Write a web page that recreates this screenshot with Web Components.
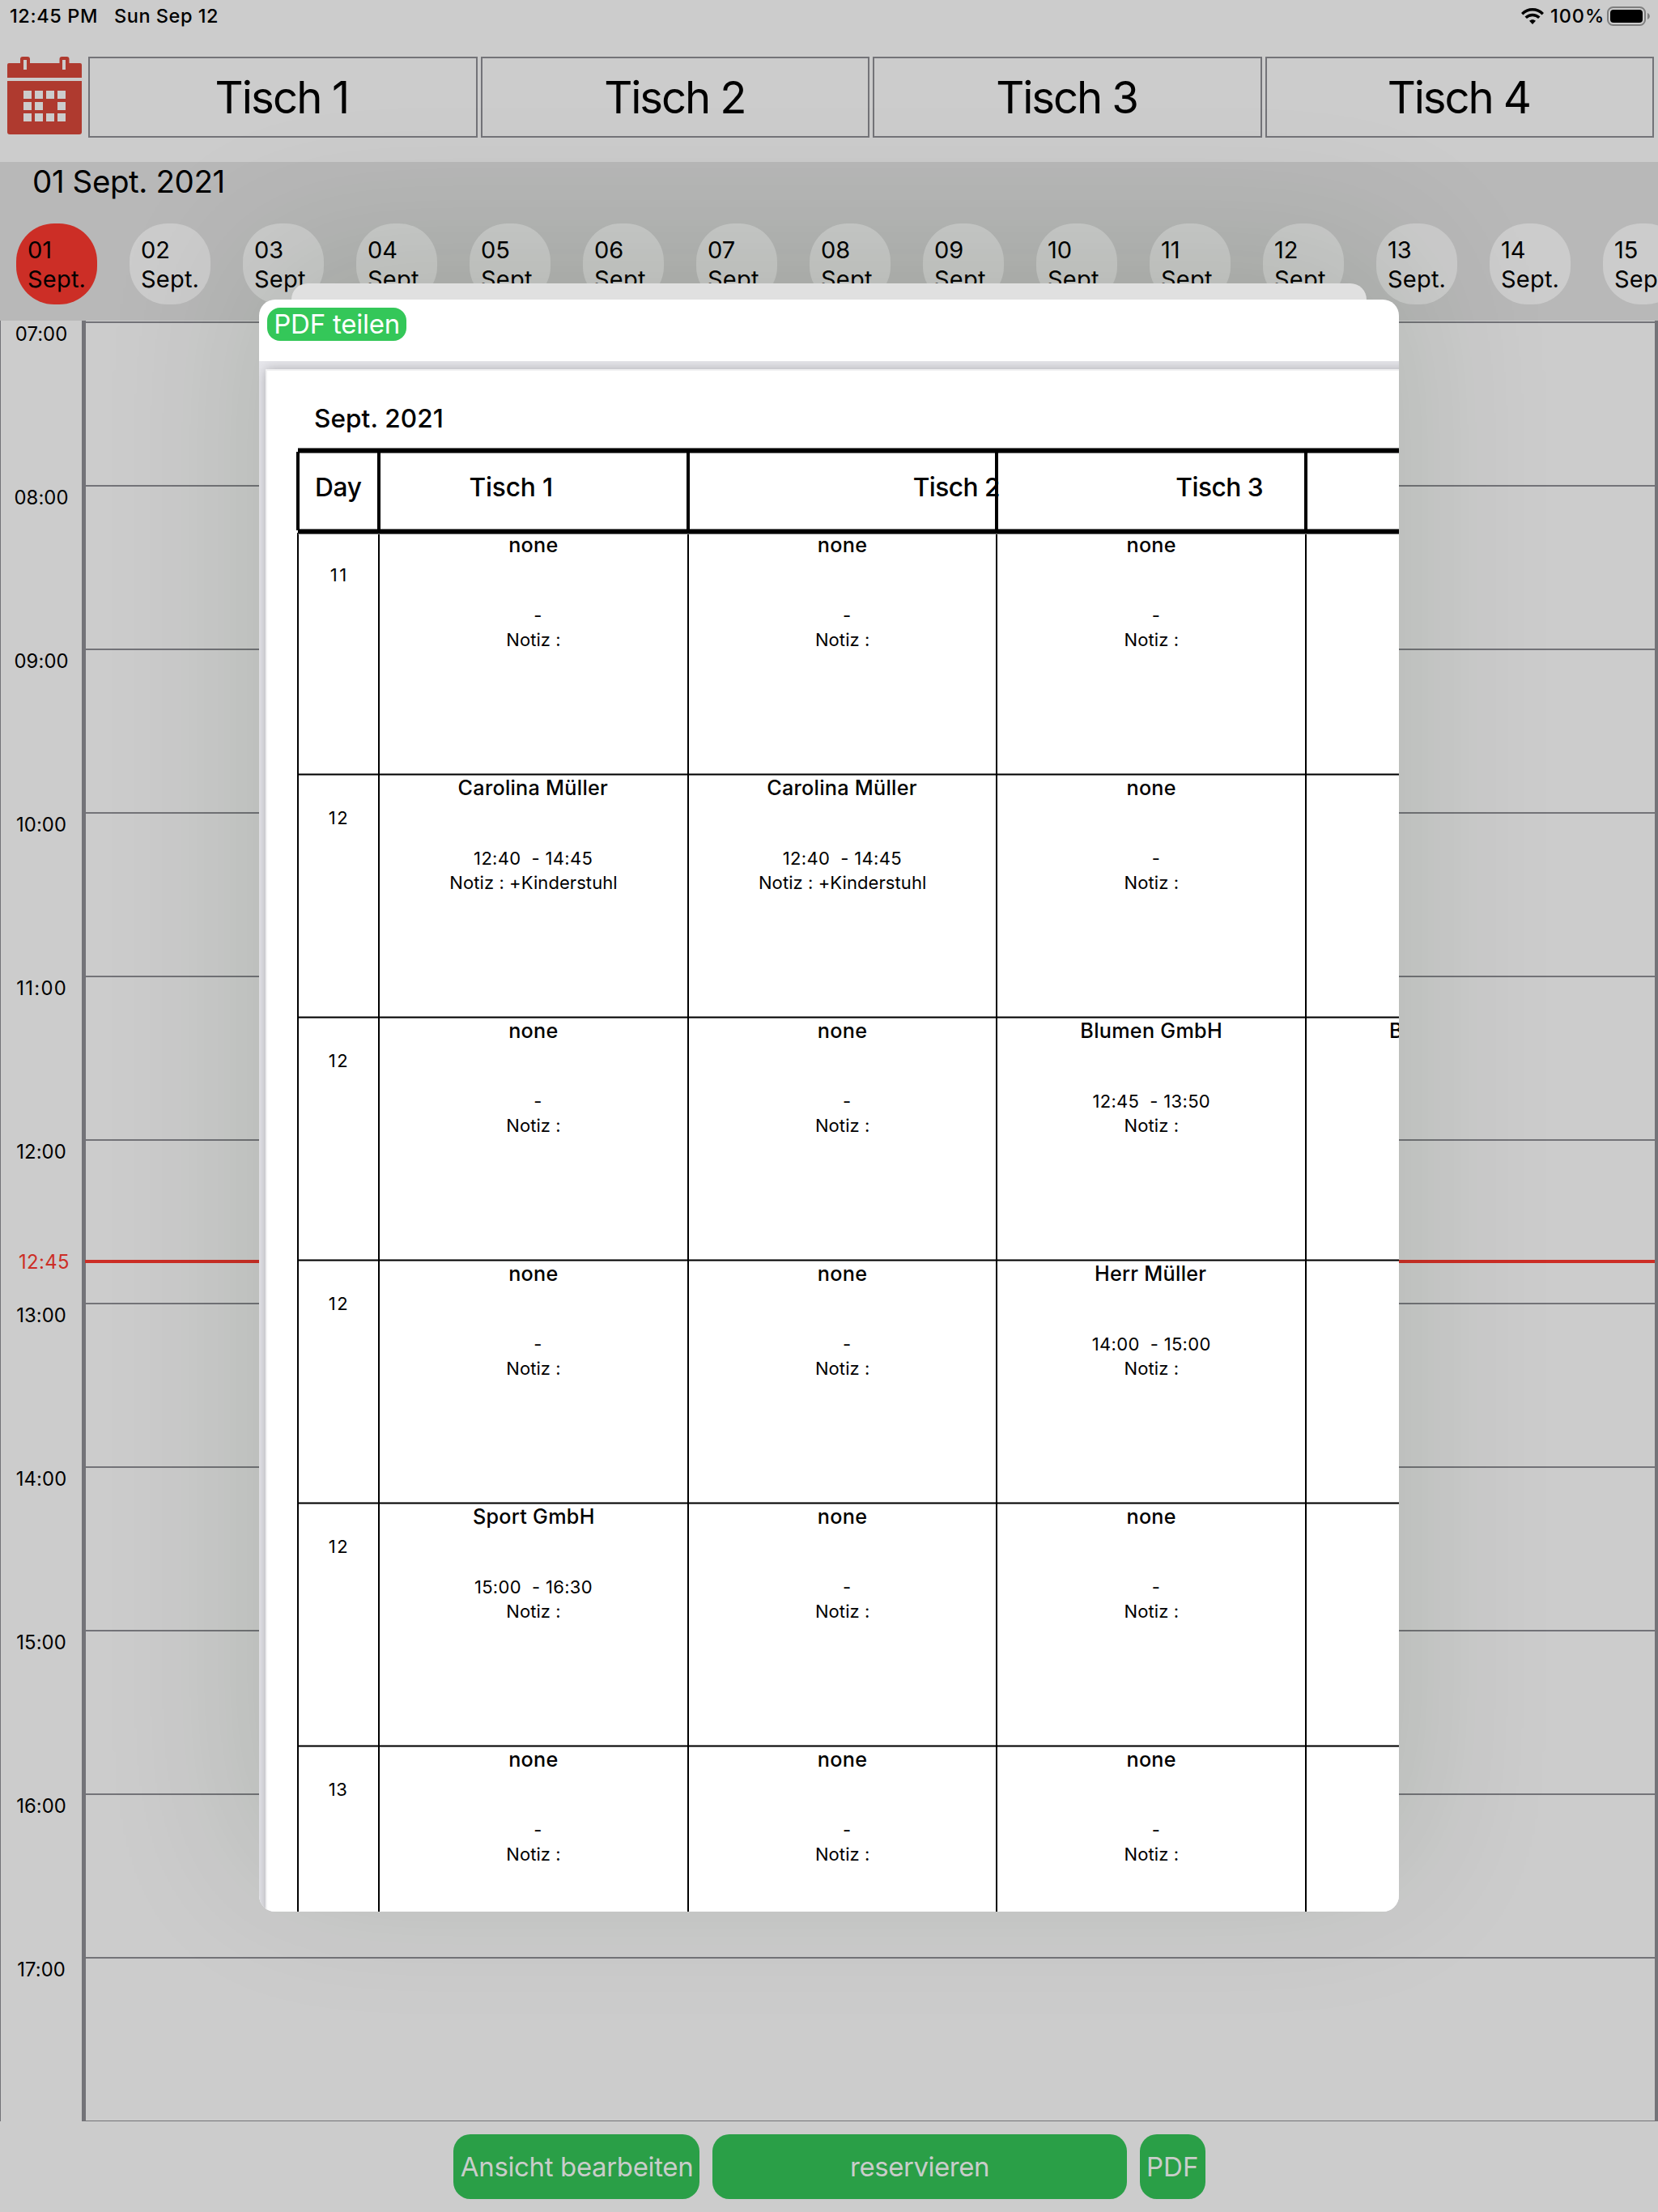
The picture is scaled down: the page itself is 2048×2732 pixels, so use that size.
<!DOCTYPE html>
<html lang="de">
<head>
<meta charset="utf-8">
<title>Tischreservierung</title>
<style>
  html, body { margin: 0; padding: 0; }
  body { width: 2048px; height: 2732px; overflow: hidden; background: #ccc; font-family: Inter, "Liberation Sans", sans-serif; color: #000; }
</style>
</head>
<body>
<reservation-app></reservation-app>
<script>
const ctx = document.createElement('canvas').getContext('2d');

function define(name, render) {
  customElements.define(name, class extends HTMLElement {
    constructor() { super(); this.attachShadow({ mode: 'open' }); }
    connectedCallback() { this.shadowRoot.innerHTML = render(this); }
  });
}

/* Tracks its text so that the sample string ("like", or the text itself) inks to "w" pixels,
   and trims the side bearings so the box equals the ink. */
customElements.define('fit-text', class extends HTMLElement {
  constructor() {
    super();
    this.attachShadow({ mode: 'open' }).innerHTML =
      '<style>:host{display:inline-block;white-space:pre}</style><slot></slot>';
  }
  connectedCallback() {
    const cs = getComputedStyle(this);
    ctx.font = `${cs.fontWeight} ${cs.fontSize} ${cs.fontFamily}`;
    const text = this.textContent;
    const sample = this.getAttribute('like') || text;
    const s = ctx.measureText(sample);
    const gap = (parseFloat(this.getAttribute('w')) - s.actualBoundingBoxLeft - s.actualBoundingBoxRight) / Math.max(1, sample.length - 1);
    const m = ctx.measureText(text);
    this.style.letterSpacing = gap + 'px';
    this.style.marginLeft = m.actualBoundingBoxLeft + 'px';
    this.style.marginRight = (m.actualBoundingBoxRight - m.width - gap) + 'px';
  }
});

define('wifi-icon', () => `
<style>:host{display:block;width:28px;height:20px}svg{display:block}</style>
<svg width="28" height="20" viewBox="0 0 28 20" fill="none" stroke="#000" stroke-width="3.5">
  <path d="M1.2 7.2C8.4 0 19.6 0 26.8 7.2"/>
  <path d="M5.7 11.8c4.7-4.5 11.900-4.500 16.600 0"/>
  <path d="M14 20l-4-4.200c2.200-2.200 5.800-2.200 8 0z" fill="#000" stroke="none"/>
</svg>`);

define('battery-icon', () => `
<style>:host{display:block;width:54px;height:24px}svg{display:block}</style>
<svg width="54" height="24" viewBox="0 0 54 24">
  <rect x="1" y="1" width="46" height="22" rx="6.500" fill="none" stroke="#7e7e7e" stroke-width="2"/>
  <rect x="4" y="4" width="40" height="16" rx="4" fill="#000"/>
  <path d="M50 8c3.800 1.500 3.800 6.500 0 8z" fill="#7e7e7e"/>
</svg>`);

define('status-bar', () => `
<style>
:host{display:flex;align-items:center;height:40px;padding:0 9px 0 13px;font-size:23.500px;font-weight:500;line-height:40px}
.gap{flex:1}.date{margin-left:23px}.pct{margin:0 6px 0 9px}
</style>
<fit-text w="106">12:45 PM</fit-text><span class="date"><fit-text w="126">Sun Sep 12</fit-text></span>
<span class="gap"></span>
<wifi-icon></wifi-icon><span class="pct"><fit-text w="63">100%</fit-text></span><battery-icon></battery-icon>`);

define('calendar-icon', () => {
  let sq = '';
  [42, 56, 70].forEach((y, r) => [20, 34, 48, 62].forEach((x, c) => {
    if (!(r === 1 && c === 2)) sq += `<rect x="${x}" y="${y}" width="10" height="10"/>`;
  }));
  return `
<style>:host{display:block;width:92px;height:96px}svg{display:block}</style>
<svg width="92" height="96" viewBox="0 0 92 96">
  <g fill="#af3a2f">
    <path d="M0 26V10q0-2 2-2H16V3q0-3 3-3h6q3 0 3 3V8H64.500V3q0-3 3-3h6q3 0 3 3V8H90q2 0 2 2V26z"/>
    <path d="M0 30H92V93q0 3-3 3H3q-3 0-3-3z"/>
  </g>
  <g fill="#ccc"><rect x="20" y="4" width="4" height="12"/><rect x="68" y="4" width="4" height="12"/>${sq}</g>
</svg>`;
});

define('table-header', () => `
<style>
:host{display:flex;height:100px;padding:30px 5px 30px 9px}
calendar-icon{margin-right:8px}
.tabs{flex:1;display:flex;gap:4px}
.tab{flex:1;box-sizing:border-box;border:2px solid #737378;text-align:center;font-size:54.500px;line-height:97px}
.tab span{padding-right:3px}
</style>
<calendar-icon></calendar-icon>
<div class="tabs"><div class="tab"><span><fit-text w="160.500">Tisch 1</fit-text></span></div>${[2, 3, 4].map(n => `<div class="tab"><fit-text like="Tisch 4" w="174">Tisch ${n}</fit-text></div>`).join('')}</div>`);

define('day-chip', el => `
<style>
:host{display:block;flex:none;box-sizing:border-box;width:100px;height:100px;border-radius:47px;background:#ccc;padding:15px 0 0 15px;font-size:29px;line-height:36px}
:host([selected]){background:#cc2e26}
div{height:36px;white-space:nowrap}
</style>
<div><fit-text like="02" w="33.2">${el.getAttribute('day')}</fit-text></div><div><fit-text w="69.600">Sept.</fit-text></div>`);

define('date-strip', () => `
<style>
:host{display:block;box-sizing:border-box;height:196px;background:#b8b8b8;padding:4px 0 0 20px;overflow:hidden}
.head{font-size:38.500px;line-height:40px;height:40px;padding-left:22px;margin-bottom:32px}
.chips{display:flex;gap:40px}
</style>
<div class="head"><fit-text w="233.500">01 Sept. 2021</fit-text></div>
<div class="chips">${Array.from({ length: 15 }, (_, i) => `<day-chip day="${String(i + 1).padStart(2, '0')}"${i ? '' : ' selected'}></day-chip>`).join('')}</div>`);

define('hour-row', el => {
  const time = el.getAttribute('time');
  const fit = time === '11:00' ? 'w="59.500"' : 'like="08:00" w="65"';
  return `
<style>
:host{display:flex;flex:none;height:202px}
.t{width:101px;box-sizing:border-box;border-left:1px solid #737378;text-align:center;font-size:23.800px;line-height:32px}
.l{flex:1;border-left:5px solid #737378;border-right:4px solid #737378}
.l::before{content:"";display:block;height:2px;background:#737378}
</style>
<div class="t">${time ? `<fit-text ${fit}>${time}</fit-text>` : ''}</div><div class="l"></div>`;
});

define('now-marker', () => `
<style>
:host{position:absolute;left:0;right:4px;top:1152px;height:20px;display:flex;align-items:center;color:#cc2e26;font-size:23.800px;line-height:20px}
.t{width:81px;padding:2px 0 0 24px}
.l{flex:1;height:4px;background:#cc2e26}
</style>
<div class="t"><fit-text w="61">12:45</fit-text></div><div class="l"></div>`);

define('day-grid', () => `
<style>
:host{display:block;position:relative;height:2224px;overflow:hidden}
.pad{display:block;height:1px;box-sizing:border-box;background:linear-gradient(90deg,#737378 1px,#ccc 1px 101px,#737378 101px 106px,#ccc 106px 2044px,#737378 2044px)}
</style>
<div class="pad"></div>
${[7, 8, 9, 10, 11, 12, 13, 14, 15, 16, 17].map(h => `<hour-row time="${String(h).padStart(2, '0')}:00"></hour-row>`).join('')}
<hour-row time=""></hour-row>
<now-marker></now-marker>`);

define('green-button', () => `
<style>
:host{display:flex;align-items:center;justify-content:center;height:80px;border-radius:21px;background:#2a9f47;color:#c9cdca;font-size:33px;line-height:40px}
</style><slot></slot>`);

define('action-bar', () => `
<style>
:host{display:flex;gap:16px;height:112px;box-sizing:border-box;padding:16px 0 0 560px}
.a{width:304px;box-sizing:border-box;padding-right:1px}.b{width:512px}.c{width:81px}
</style>
<green-button class="a"><fit-text w="285.300">Ansicht bearbeiten</fit-text></green-button>
<green-button class="b"><fit-text w="168">reservieren</fit-text></green-button>
<green-button class="c"><fit-text w="61">PDF</fit-text></green-button>`);

define('booking-cell', el => {
  const [name, time, note] = el.getAttribute('data').split('|');
  return `
<style>
:host{display:block;flex:none;box-sizing:border-box;width:381.670px;border-left:2px solid #000;text-align:center;font-size:22px;line-height:30px}
.n{font-size:25.200px;font-weight:500;line-height:31px;height:31px;margin-bottom:56px}
.d{height:30px}
.dash{padding-left:11px}
</style>
${name ? `<div class="n"><fit-text like="Carolina Müller" w="184.500">${name}</fit-text></div>` : ''}
${note === undefined ? '' : `<div class="d${time ? '' : ' dash'}"><fit-text like="12:40  - 14:45" w="145.400">${time || '-'}</fit-text></div>
<div class="d"><fit-text like="Notiz : +Kinderstuhl" w="205">Notiz :${note ? ' ' + note : ''}</fit-text></div>`}`;
});

define('booking-row', el => {
  const day = el.getAttribute('day');
  return `
<style>
:host{display:block;height:300px}
.r{display:flex;height:297px}
.day{flex:none;box-sizing:border-box;width:100px;border-left:2px solid #000;text-align:center;padding:37px 1px 0 0;font-size:22px;line-height:30px}
.lines{display:flex;height:3px;background:linear-gradient(#777 1px,#000 1px 2px,#777 2px)}
.lines i{flex:none;width:381.670px;box-sizing:border-box;height:3px;border-left:2px solid #000}
.lines i:first-child{width:100px}
</style>
<div class="r"><div class="day"><fit-text w="${day === '11' ? 17.6 : 21.5}">${day}</fit-text></div>
${el.getAttribute('cells').split(';').map(c => `<booking-cell data="${c}"></booking-cell>`).join('')}</div>
<div class="lines"><i></i><i></i><i></i><i></i><i></i></div>`;
});

define('booking-table', () => {
  const rows = [
    ['11', 'none||;none||;none||;'],
    ['12', 'Carolina Müller|12:40  - 14:45|+Kinderstuhl;Carolina Müller|12:40  - 14:45|+Kinderstuhl;none||;'],
    ['12', 'none||;none||;Blumen GmbH|12:45  - 13:50|;Blumen GmbH'],
    ['12', 'none||;none||;Herr Müller|14:00  - 15:00|;'],
    ['12', 'Sport GmbH|15:00  - 16:30|;none||;none||;'],
    ['13', 'none||;none||;none||;']
  ];
  return `
<style>
:host{display:block;width:1627px}
.rule{height:7px;background:linear-gradient(#777 1px,#000 1px 6px,#777 6px);margin-left:1px}
.head{display:flex;height:97px;margin:-2px 0 -2px -1px;position:relative;z-index:1}
.h{flex:none;box-sizing:border-box;width:381.670px;border-left:4px solid #000;font-size:31.700px;font-weight:450;line-height:88px;white-space:nowrap}
.h.day{width:100px;padding-left:21px}
.low{position:relative;margin-bottom:-2px}
</style>
<div class="rule"></div>
<div class="head">
<div class="h day"><fit-text w="55.700">Day</fit-text></div>
<div class="h" style="padding-left:110.500px"><fit-text w="100.500">Tisch 1</fit-text></div>
<div class="h" style="padding-left:277px"><fit-text like="Tisch 3" w="106.400">Tisch 2</fit-text></div>
<div class="h" style="padding-left:220px"><fit-text like="Tisch 3" w="106.400">Tisch 3</fit-text></div>
<div class="h"></div>
</div>
<div class="rule low"></div>
${rows.map(([d, c]) => `<booking-row day="${d}" cells="${c}"></booking-row>`).join('')}`;
});

define('pdf-page', () => `
<style>
:host{display:block;box-sizing:border-box;width:1684px;height:2400px;background:#fff;border:2px solid #f1f1f2;border-width:2px 0 0 2px;box-shadow:0 0 14px rgba(0,0,0,.26);padding:38px 0 0 37px}
.title{font-size:31.500px;font-weight:500;line-height:41px;height:41px;padding-left:22px;margin-bottom:16px}
</style>
<div class="title"><fit-text w="157">Sept. 2021</fit-text></div>
<booking-table></booking-table>`);

define('pdf-sheet', () => `
<style>
:host{position:absolute;left:320px;top:350px;width:1408px;height:2011px;display:flex;flex-direction:column;align-items:center}
.shade{position:absolute;inset:20px 0 0;border-radius:20px;box-shadow:0 -55px 200px rgba(15,40,0,.14)}
.back{position:relative;flex:none;width:1328px;height:20px;background:#e0e0e0;border-radius:20px 20px 0 0}
.front{position:relative;width:1408px;flex:1;min-height:0;display:flex;flex-direction:column;background:#fff;border-radius:20px;overflow:hidden}
.bar{height:76px;flex:none;box-sizing:border-box;padding:10px}
green-button{width:172px;height:41px;box-sizing:border-box;padding-bottom:2px;border-radius:16px;background:#34c759;color:#fff}
.view{flex:1;min-height:0;overflow:hidden;background:#e7e7ec;padding:10px 0 0 8px}
</style>
<div class="shade"></div>
<div class="back"></div>
<div class="front">
<div class="bar"><green-button><fit-text w="151.500">PDF teilen</fit-text></green-button></div>
<div class="view"><pdf-page></pdf-page></div>
</div>`);

define('reservation-app', () => `
<style>:host{display:flex;flex-direction:column;position:relative;width:2048px;height:2732px;overflow:hidden;background:#ccc}</style>
<status-bar></status-bar>
<table-header></table-header>
<date-strip></date-strip>
<day-grid></day-grid>
<action-bar></action-bar>
<pdf-sheet></pdf-sheet>`);
</script>
</body>
</html>
